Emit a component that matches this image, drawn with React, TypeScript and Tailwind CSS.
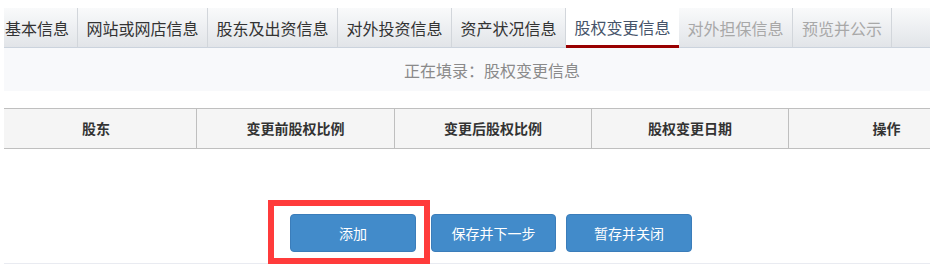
import React from "react";

const tabs: { label: string; state: "normal" | "active" | "disabled"; w: number }[] = [
  { label: "基本信息", state: "normal", w: 74 },
  { label: "网站或网店信息", state: "normal", w: 130 },
  { label: "股东及出资信息", state: "normal", w: 130 },
  { label: "对外投资信息", state: "normal", w: 114 },
  { label: "资产状况信息", state: "normal", w: 114 },
  { label: "股权变更信息", state: "active", w: 113 },
  { label: "对外担保信息", state: "disabled", w: 114 },
  { label: "预览并公示", state: "disabled", w: 99 },
];

const font = { fontFamily: '"Noto Sans CJK SC", "Microsoft YaHei", sans-serif' };

export default function App() {
  return (
    <div className="relative w-[936px] h-[276px] bg-white overflow-hidden" style={font}>
      <div className="w-[930px] overflow-hidden pl-[4px] pt-[8px]">
        <div className="w-[976px]">
          {/* Tab bar */}
          <div className="flex h-[40px] bg-gradient-to-b from-[#f9fafb] to-[#e1e4e8]">
            {tabs.map((t, i) => {
              const base =
                "flex items-center h-[40px] text-[16px] leading-none whitespace-nowrap box-border";
              if (t.state === "active") {
                return (
                  <div
                    key={i}
                    className={`${base} justify-center bg-white text-[#46546a] border-b-[3px] border-[#990000] pt-[1px]`}
                    style={{ width: t.w }}
                  >
                    {t.label}
                  </div>
                );
              }
              return (
                <div
                  key={i}
                  className={`${base} border-r border-r-[#d2d6db] border-b border-b-[#cbd3dd] ${
                    i === 0 ? "justify-start pl-[1px]" : "justify-center"
                  } ${t.state === "disabled" ? "text-[#a8a8a8]" : "text-[#333333]"}`}
                  style={{ width: t.w }}
                >
                  {t.label}
                </div>
              );
            })}
            <div className="flex-1 h-[40px] border-b border-b-[#cbd3dd]" />
          </div>

          {/* Status strip */}
          <div className="h-[43px] bg-[#f8f9fb] flex items-center justify-center text-[16px] text-[#8a8a8a]">
            正在填录：股权变更信息
          </div>

          {/* Table */}
          <div className="mt-[17px] flex h-[41px] border-y border-[#bfbfbf] bg-[#f5f5f5] text-[14px] font-bold text-[#333333]">
            <div className="w-[192px] flex items-center justify-center pr-[8px]">股东</div>
            <div className="w-[198px] flex items-center justify-center border-l border-[#bfbfbf]">变更前股权比例</div>
            <div className="w-[197px] flex items-center justify-center border-l border-[#bfbfbf]">变更后股权比例</div>
            <div className="w-[197px] flex items-center justify-center border-l border-[#bfbfbf]">股权变更日期</div>
            <div className="flex-1 flex items-center justify-center border-l border-[#bfbfbf] pl-[4px]">操作</div>
          </div>

          {/* Buttons */}
          <div className="mt-[65px] flex justify-center pr-[2px]">
            <button className="w-[126px] h-[38px] rounded-[4px] bg-[#428bca] border border-[#3b7dba] text-white text-[14px]">
              添加
            </button>
            <button className="ml-[15px] w-[125px] h-[38px] rounded-[4px] bg-[#428bca] border border-[#3b7dba] text-white text-[14px]">
              保存并下一步
            </button>
            <button className="ml-[10px] w-[126px] h-[38px] rounded-[4px] bg-[#428bca] border border-[#3b7dba] text-white text-[14px]">
              暂存并关闭
            </button>
          </div>

          <div className="mt-[11px] h-px bg-[#e9ebf1]" />
        </div>
      </div>

      {/* Annotation highlight */}
      <div className="absolute left-[268px] top-[200px] w-[162px] h-[64px] border-[6px] border-[#ff3b3b]" />
    </div>
  );
}
